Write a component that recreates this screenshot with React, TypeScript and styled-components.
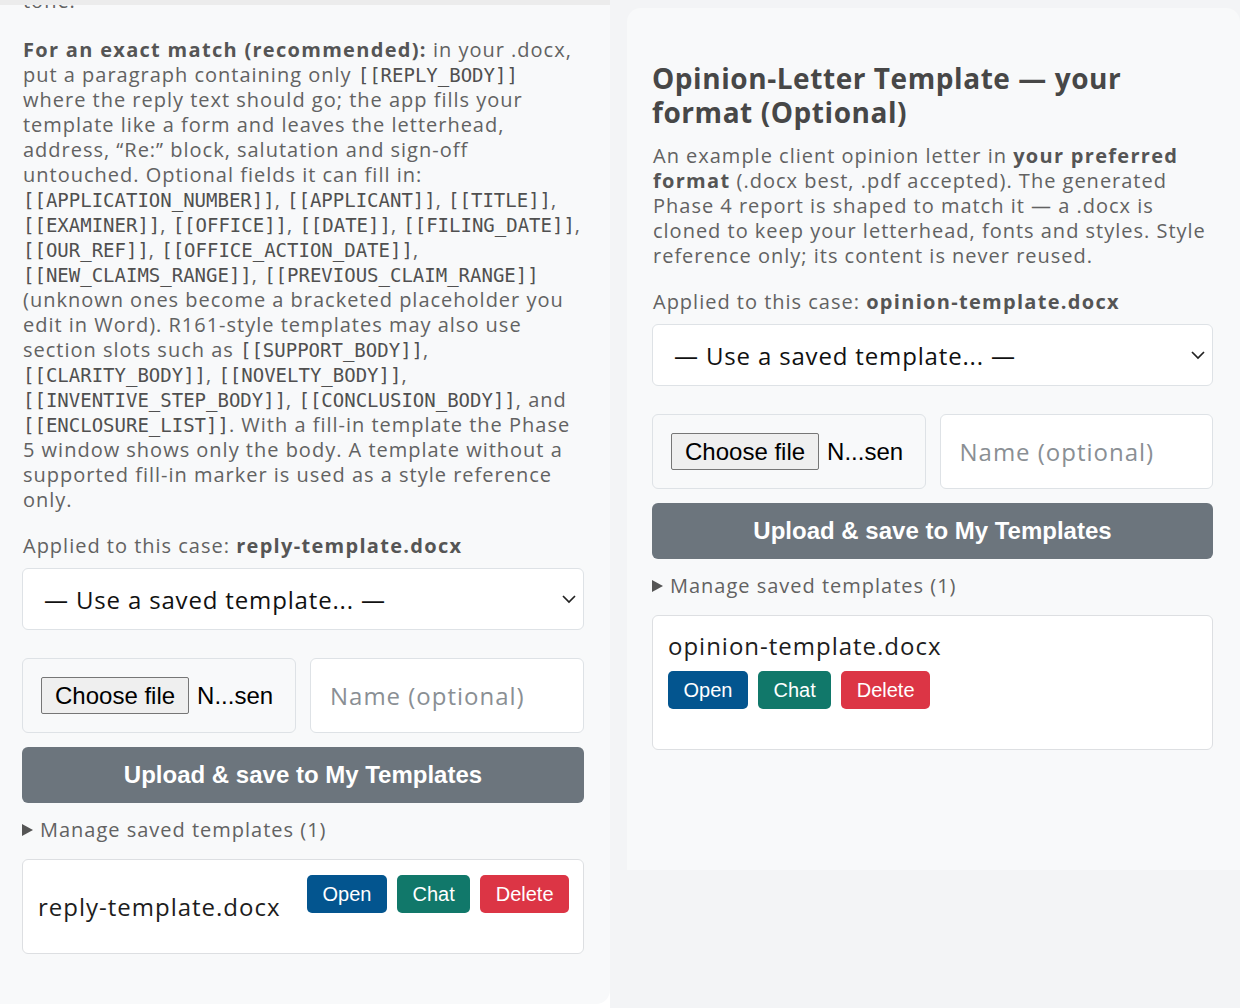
import * as React from 'react';
import styled, { createGlobalStyle } from 'styled-components';

const GlobalStyle = createGlobalStyle`
  html, body {
    margin: 0;
    padding: 0;
    background: #ffffff;
  }
  body {
    font-family: "Open Sans", "DejaVu Sans", sans-serif;
    overflow: hidden;
  }
`;

const BODY_FONT = `"Open Sans", "DejaVu Sans", sans-serif`;
const UI_FONT = `"Liberation Sans", Arial, sans-serif`;

const Layout = styled.div`
  display: grid;
  grid-template-columns: 610px 1fr;
  height: 1008px;
`;

const LeftPane = styled.section`
  background: #f8f9fa;
  border-top: 5px solid #ececec;
  border-bottom-right-radius: 14px;
  padding: 0 26px 0 22px;
  height: 999px;
  overflow: hidden;
  color: #626262;
  letter-spacing: 0.062em;
`;

const RightColumn = styled.div`
  background: #f3f4f6;
  padding: 8px 0 0 17px;
`;

const RightPane = styled.section`
  background: #f8f9fa;
  border-radius: 14px 14px 0 0;
  padding: 53px 27px 0 25px;
  height: 809px;
  color: #626262;
  letter-spacing: 0.062em;
`;

const Heading = styled.h2`
  margin: 0 0 14px;
  font-family: ${BODY_FONT};
  font-size: 28px;
  line-height: 34px;
  font-weight: 700;
  letter-spacing: 0.02em;
  color: #474747;
  white-space: nowrap;
`;

const Prose = styled.p`
  margin: 0 0 21px;
  font-family: ${BODY_FONT};
  font-size: 20px;
  line-height: 25px;
  white-space: nowrap;
  padding-left: 1px;

  b {
    font-weight: 700;
    color: #555;
    letter-spacing: 0.065em;
  }
`;

const ClippedLine = styled(Prose)`
  margin-top: -17px;
  margin-bottom: 24px;
`;

const Code = styled.code`
  font-family: "DejaVu Sans Mono", "Liberation Mono", monospace;
  font-size: 19px;
  line-height: 1;
  letter-spacing: 0;
  color: #505050;
`;

const Applied = styled.div`
  font-family: ${BODY_FONT};
  font-size: 20px;
  line-height: 25px;
  margin-bottom: 10px;
  padding-left: 1px;

  b {
    font-weight: 700;
    color: #555;
    letter-spacing: 0.065em;
  }
`;

const SelectBox = styled.div`
  display: flex;
  align-items: center;
  justify-content: space-between;
  height: 60px;
  background: #ffffff;
  border: 1px solid #dee2e6;
  border-radius: 6px;
  padding: 0 6px 0 21px;
  font-family: ${BODY_FONT};
  font-size: 24px;
  letter-spacing: 0.035em;
  color: #111;
  margin-bottom: 28px;
`;

const UploadRow = styled.div`
  display: grid;
  grid-template-columns: 1fr 1fr;
  gap: 14px;
  margin-bottom: 14px;
`;

const FileBox = styled.div`
  display: flex;
  align-items: center;
  gap: 8px;
  height: 73px;
  background: #f8f9fa;
  border: 1px solid #dee2e6;
  border-radius: 6px;
  padding: 0 18px;
  font-family: ${UI_FONT};
  font-size: 24px;
  letter-spacing: 0;
  color: #000;
  white-space: nowrap;
  overflow: hidden;
`;

const ChooseButton = styled.span`
  display: inline-flex;
  align-items: center;
  height: 35px;
  padding: 0 13px;
  background: #efefef;
  border: 1px solid #767676;
  border-radius: 2px;
`;

const NameInput = styled.div`
  display: flex;
  align-items: center;
  height: 73px;
  background: #ffffff;
  border: 1px solid #dee2e6;
  border-radius: 6px;
  padding: 0 19px;
  font-family: ${BODY_FONT};
  font-size: 24px;
  color: #8a8f94;
`;

const UploadButton = styled.div`
  display: flex;
  align-items: center;
  justify-content: center;
  height: 56px;
  background: #6c757d;
  border-radius: 6px;
  color: #ffffff;
  font-family: ${UI_FONT};
  font-weight: 700;
  font-size: 24px;
  letter-spacing: 0;
  margin-bottom: 14px;
`;

const Manage = styled.div`
  display: flex;
  align-items: center;
  gap: 7px;
  font-family: ${BODY_FONT};
  font-size: 20px;
  line-height: 25px;
  margin-bottom: 17px;
`;

const Card = styled.div`
  display: flex;
  flex-wrap: wrap;
  align-items: center;
  justify-content: space-between;
  row-gap: 10px;
  background: #ffffff;
  border: 1px solid #dddfe2;
  border-radius: 6px;
  padding: 15px 14px 15px 15px;
`;

const FileName = styled.div<{ $full?: boolean }>`
  font-family: ${BODY_FONT};
  font-size: 24px;
  line-height: 30px;
  color: #1d1d1d;
  flex-basis: ${({ $full }) => ($full ? '100%' : 'auto')};
`;

const Actions = styled.div`
  display: flex;
  gap: 10px;
  margin-bottom: 25px;
`;

const ActionButton = styled.span<{ $tone: string }>`
  display: inline-flex;
  align-items: center;
  height: 38px;
  padding: 0 15.5px;
  border-radius: 5px;
  background: ${({ $tone }) => $tone};
  color: #ffffff;
  font-family: ${UI_FONT};
  font-size: 20px;
  letter-spacing: 0;
`;

const Chevron = () => (
  <svg width="16" height="16" viewBox="0 0 16 16" fill="none">
    <path d="M2 5 L8 11 L14 5" stroke="#222" strokeWidth="1.7" />
  </svg>
);

const Triangle = () => (
  <svg width="11" height="12" viewBox="0 0 11 12">
    <path d="M0 0 L11 6 L0 12 Z" fill="#555" />
  </svg>
);

type TemplateBlockProps = {
  applied: string;
  fileName: string;
  stacked?: boolean;
};

const TemplateBlock = ({ applied, fileName, stacked }: TemplateBlockProps) => (
  <>
    <Applied>
      Applied to this case: <b>{applied}</b>
    </Applied>
    <SelectBox>
      <span>— Use a saved template... —</span>
      <Chevron />
    </SelectBox>
    <UploadRow>
      <FileBox>
        <ChooseButton>Choose file</ChooseButton>
        <span>N...sen</span>
      </FileBox>
      <NameInput>Name (optional)</NameInput>
    </UploadRow>
    <UploadButton>Upload &amp; save to My Templates</UploadButton>
    <Manage>
      <Triangle />
      <span>Manage saved templates (1)</span>
    </Manage>
    <Card>
      <FileName $full={stacked}>{fileName}</FileName>
      <Actions>
        <ActionButton $tone="#03558f">Open</ActionButton>
        <ActionButton $tone="#11786a">Chat</ActionButton>
        <ActionButton $tone="#dc3545">Delete</ActionButton>
      </Actions>
    </Card>
  </>
);

export default function App() {
  return (
    <>
      <GlobalStyle />
      <Layout>
        <LeftPane>
          <ClippedLine>tone.</ClippedLine>
          <Prose>
            <b>For an exact match (recommended):</b> in your .docx,
            <br />
            put a paragraph containing only <Code>[[REPLY_BODY]]</Code>
            <br />
            where the reply text should go; the app fills your
            <br />
            template like a form and leaves the letterhead,
            <br />
            address, “Re:” block, salutation and sign-off
            <br />
            untouched. Optional fields it can fill in:
            <br />
            <Code>[[APPLICATION_NUMBER]]</Code>, <Code>[[APPLICANT]]</Code>, <Code>[[TITLE]]</Code>,
            <br />
            <Code>[[EXAMINER]]</Code>, <Code>[[OFFICE]]</Code>, <Code>[[DATE]]</Code>, <Code>[[FILING_DATE]]</Code>,
            <br />
            <Code>[[OUR_REF]]</Code>, <Code>[[OFFICE_ACTION_DATE]]</Code>,
            <br />
            <Code>[[NEW_CLAIMS_RANGE]]</Code>, <Code>[[PREVIOUS_CLAIM_RANGE]]</Code>
            <br />
            (unknown ones become a bracketed placeholder you
            <br />
            edit in Word). R161-style templates may also use
            <br />
            section slots such as <Code>[[SUPPORT_BODY]]</Code>,
            <br />
            <Code>[[CLARITY_BODY]]</Code>, <Code>[[NOVELTY_BODY]]</Code>,
            <br />
            <Code>[[INVENTIVE_STEP_BODY]]</Code>, <Code>[[CONCLUSION_BODY]]</Code>, and
            <br />
            <Code>[[ENCLOSURE_LIST]]</Code>. With a fill-in template the Phase
            <br />
            5 window shows only the body. A template without a
            <br />
            supported fill-in marker is used as a style reference
            <br />
            only.
          </Prose>
          <TemplateBlock applied="reply-template.docx" fileName="reply-template.docx" />
        </LeftPane>
        <RightColumn>
          <RightPane>
            <Heading>
              Opinion-Letter Template — your
              <br />
              format (Optional)
            </Heading>
            <Prose>
              An example client opinion letter in <b>your preferred</b>
              <br />
              <b>format</b> (.docx best, .pdf accepted). The generated
              <br />
              Phase 4 report is shaped to match it — a .docx is
              <br />
              cloned to keep your letterhead, fonts and styles. Style
              <br />
              reference only; its content is never reused.
            </Prose>
            <TemplateBlock applied="opinion-template.docx" fileName="opinion-template.docx" stacked />
          </RightPane>
        </RightColumn>
      </Layout>
    </>
  );
}
